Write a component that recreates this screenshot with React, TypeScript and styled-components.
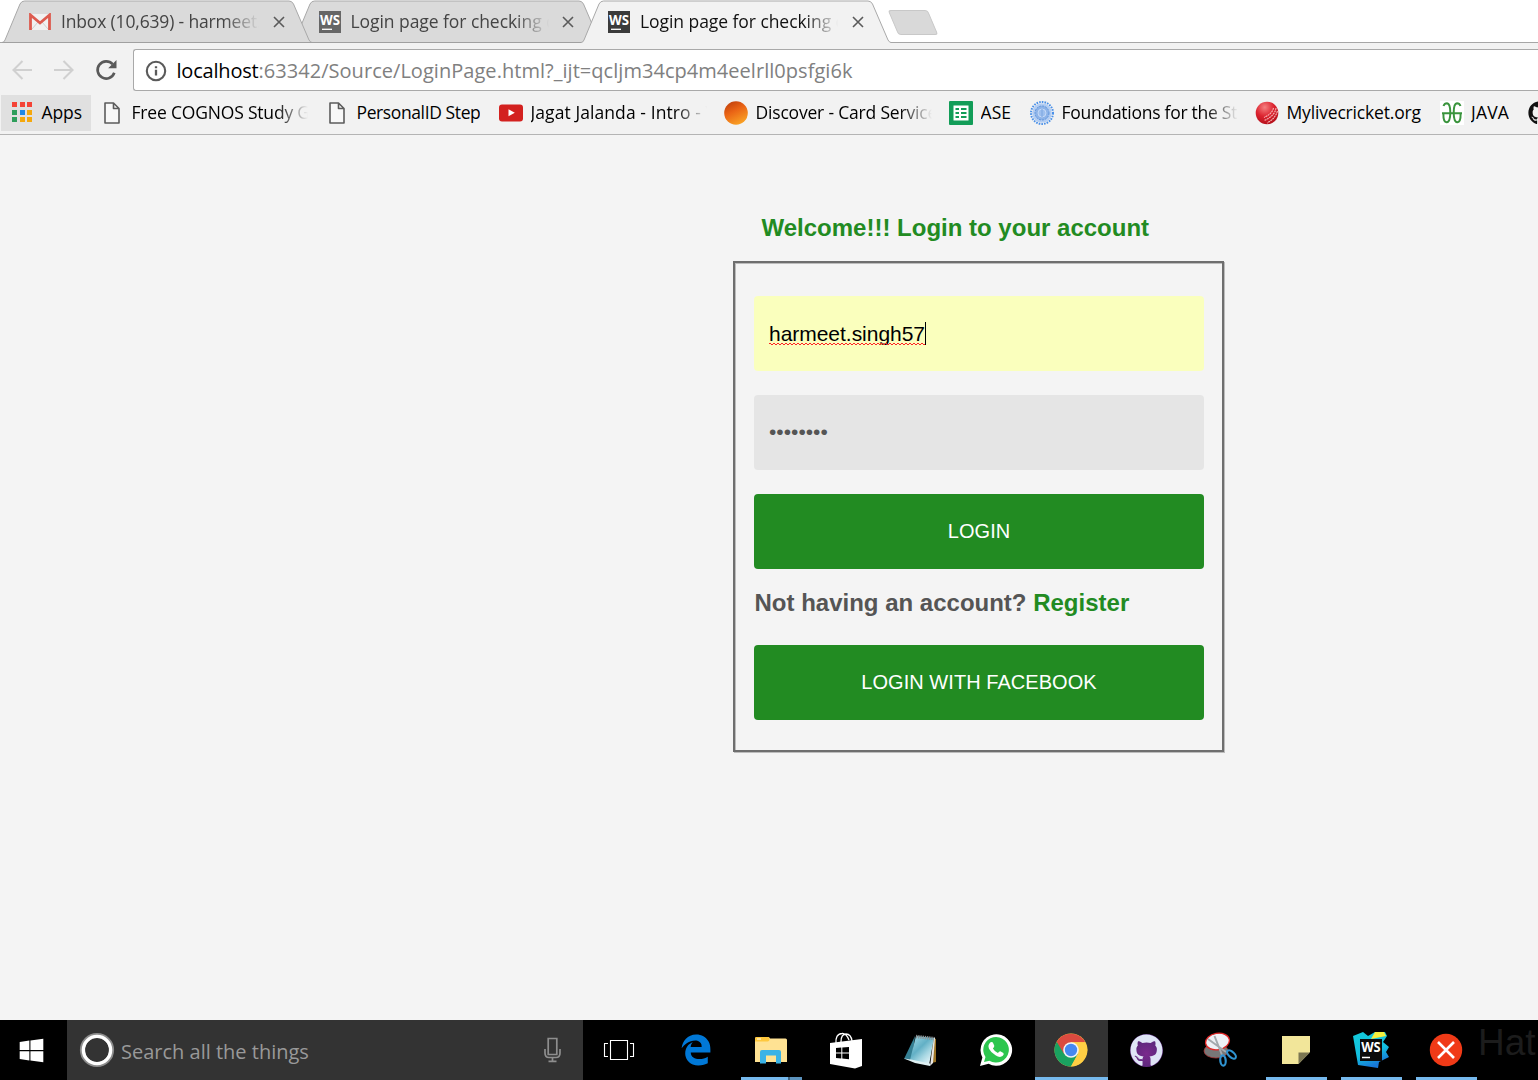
import React from "react";
import styled, { createGlobalStyle, css } from "styled-components";
import { FaWindows, FaEdgeLegacy, FaGithub } from "react-icons/fa6";

const uiFont = `"Open Sans", "Noto Sans", sans-serif`;
const pageFont = `"Liberation Sans", Arial, sans-serif`;

const GlobalStyle = createGlobalStyle`
  *, *::before, *::after { box-sizing: border-box; }
  body { margin: 0; background: #fff; overflow: hidden; }
  svg { display: block; flex: none; }
`;

const Screen = styled.div`
  display: flex;
  flex-direction: column;
  width: 1538px;
  height: 1080px;
  overflow: hidden;
  font-family: ${uiFont};
`;

/* ---------- Tab strip ---------- */

const TabStrip = styled.div`
  display: flex;
  flex: none;
  height: 43px;
  padding-left: 2px;
  background: #fff;
  box-shadow: inset 0 -1px 0 #a6a6a6;
`;

const Tab = styled.div<{ $layer: number }>`
  position: relative;
  z-index: ${(p) => p.$layer};
  display: flex;
  flex: none;
  align-items: center;
  width: 310px;
  height: 43px;
  margin-right: -20.5px;
  padding: 0 24px 0 27px;
`;

const TabShape = styled.svg`
  position: absolute;
  inset: 0;
  z-index: -1;
`;

const TabTitle = styled.span<{ $active?: boolean; $spacing: number }>`
  flex: none;
  width: 198px;
  margin: 0 0 1.5px 10px;
  overflow: hidden;
  white-space: nowrap;
  font-size: 17.5px;
  line-height: 24px;
  letter-spacing: ${(p) => p.$spacing}px;
  color: ${(p) => (p.$active ? "#111" : "#444")};
  mask-image: linear-gradient(to right, #000 calc(100% - 34px), transparent);
`;

const CloseIcon = styled.svg`
  margin-left: 13.5px;
`;

const NewTab = styled.div`
  flex: none;
  width: 40px;
  height: 25px;
  margin: 10px 0 0 22px;
  border: 1px solid #c8c8c8;
  border-radius: 3px;
  background: #d9d9d9;
  transform: skewX(23deg);
`;

/* ---------- Address bar ---------- */

const Toolbar = styled.div`
  display: flex;
  flex: none;
  align-items: center;
  height: 49px;
  padding: 6px 0 1px 10px;
  background: #f2f2f2;
`;

const NavButton = styled.div`
  display: flex;
  justify-content: center;
  width: 42px;
  &:first-child { margin-left: -9px; }
`;

const Omnibox = styled.div`
  display: flex;
  flex: 1;
  align-items: center;
  height: 42px;
  margin-left: 6px;
  padding: 1px 0 0 11px;
  border: 1px solid #a9a9a9;
  border-right: 0;
  border-radius: 3px 0 0 3px;
  background: #fff;
`;

const Url = styled.span`
  margin-left: 9.5px;
  font-size: 20px;
  line-height: 28px;
  letter-spacing: 0.04px;
  color: #808080;
`;

const Host = styled.span`
  letter-spacing: -0.2px;
  color: #000;
`;

/* ---------- Bookmarks ---------- */

const BookmarkBar = styled.div`
  display: flex;
  flex: none;
  height: 43px;
  padding: 3px 0 3px 1px;
  overflow: hidden;
  border-bottom: 1px solid #b4b4b4;
  background: #f2f2f2;
`;

const AppsButton = styled.div`
  display: flex;
  flex: none;
  align-items: center;
  width: 90px;
  height: 36px;
  margin-right: 9px;
  padding: 0 0 2px 11px;
  gap: 9.5px;
  background: #e0e0e0;
  color: #000;
  font-size: 17.5px;
  letter-spacing: -0.1px;
`;

const AppsGrid = styled.div`
  display: grid;
  grid-template-columns: repeat(3, 5px);
  grid-auto-rows: 5px;
  gap: 2.5px;
`;

const AppsDot = styled.i<{ $color: string }>`
  background: ${(p) => p.$color};
`;

const Bookmark = styled.div<{ $width: number }>`
  display: flex;
  flex: none;
  align-items: center;
  width: ${(p) => p.$width}px;
  height: 36px;
  padding-bottom: 1px;
`;

const BookmarkIcon = styled.div`
  display: flex;
  flex: none;
  justify-content: center;
  width: 24px;
  margin-right: 7.5px;
`;

const BookmarkLabel = styled.span<{ $spacing: number; $fade?: boolean }>`
  margin-bottom: 2px;
  overflow: hidden;
  white-space: nowrap;
  font-size: 17.5px;
  line-height: 24px;
  letter-spacing: ${(p) => p.$spacing}px;
  color: #000;
  ${(p) =>
    p.$fade &&
    css`
      width: 176px;
      mask-image: linear-gradient(to right, #000 calc(100% - 32px), transparent);
    `}
`;

/* ---------- Page ---------- */

const Page = styled.main`
  flex: 1;
  padding: 79px 0 0 733px;
  background: #f4f4f4;
  font-family: ${pageFont};
`;

const Title = styled.h1`
  margin: 0 0 19px;
  padding-left: 28.5px;
  font-size: 24px;
  line-height: 28px;
  color: #228b22;
`;

const LoginBox = styled.form`
  display: flex;
  flex-direction: column;
  width: 491px;
  height: 491px;
  padding: 33px 18px 0 19px;
  border: 2px solid #6e6e6e;
  box-shadow: 1px 1px 0 #bcbcbc, inset 1px 1px 0 #bcbcbc;
`;

const Field = styled.div<{ $filled?: boolean }>`
  display: flex;
  align-items: center;
  height: 75px;
  margin-bottom: 24px;
  padding: 0 15px 1px;
  border-radius: 4px;
  background: ${(p) => (p.$filled ? "#faffbd" : "#e5e5e5")};
  color: ${(p) => (p.$filled ? "#000" : "#555")};
  font-size: 21px;
  line-height: 24px;
`;

const Misspelled = styled.span`
  position: relative;
  padding-top: 2px;
  letter-spacing: -0.03px;
  &::after {
    content: "";
    position: absolute;
    left: 0;
    right: 0;
    bottom: 1px;
    height: 2px;
    background:
      repeating-linear-gradient(to right, #f22 0 2px, transparent 2px 4px) 0 0 / 100% 1px no-repeat,
      repeating-linear-gradient(to right, transparent 0 2px, #f22 2px 4px) 0 1px / 100% 1px no-repeat;
  }
`;

const Caret = styled.span`
  width: 1px;
  height: 23px;
  background: #000;
`;

const Button = styled.button`
  flex: none;
  height: 75px;
  padding: 0 0 1px;
  border: 0;
  border-radius: 4px;
  background: #228b22;
  color: #fff;
  font: 20px ${pageFont};
  letter-spacing: 0.05px;
`;

const Hint = styled.p`
  margin: 20px 0 28px;
  padding-left: 0.5px;
  font-size: 24px;
  font-weight: bold;
  line-height: 28px;
  color: #555;
`;

const Register = styled.a`
  color: #228b22;
`;

/* ---------- Taskbar ---------- */

const Taskbar = styled.footer`
  display: flex;
  flex: none;
  height: 60px;
  overflow: hidden;
  background: #000;
`;

const StartButton = styled.div`
  display: flex;
  flex: none;
  align-items: center;
  justify-content: center;
  width: 67px;
  padding: 0 5px 0 0;
  color: #fff;
`;

const SearchBox = styled.div`
  display: flex;
  flex: none;
  align-items: center;
  width: 516px;
  margin-right: 2px;
  padding: 0 21px 0 12px;
  background: #333;
  color: #999;
  font-size: 20px;
`;

const SearchText = styled.span`
  flex: 1;
  padding: 2px 0 0 6px;
`;

const Task = styled.div<{ $open?: boolean; $focused?: boolean; $stacked?: boolean; $nudge?: number }>`
  display: flex;
  flex: none;
  align-items: center;
  justify-content: center;
  position: relative;
  width: 73px;
  margin-right: 2px;
  padding-right: ${(p) => p.$nudge ?? 1.5}px;
  background: ${(p) => (p.$focused ? "#333" : "transparent")};
  ${(p) =>
    (p.$open || p.$focused) &&
    css`
      &::after {
        content: "";
        position: absolute;
        bottom: 0;
        left: ${p.$focused ? 0 : 6}px;
        right: ${p.$focused ? 0 : 6}px;
        height: 3px;
        background: ${p.$stacked
          ? "linear-gradient(to right, #76b9ed 47px, #3e6482 47px 49px, #5c93be 49px)"
          : "#76b9ed"};
      }
    `}
`;

const EdgeIcon = styled(FaEdgeLegacy)`
  color: #0078d7;
`;

const CatBadge = styled.div`
  display: flex;
  border-radius: 50%;
  background: radial-gradient(circle at 50% 60%, #7a2a8c, #43266f);
  color: #dfe5f6;
`;

const Overflow = styled.span`
  flex: none;
  margin: 2px 0 0 -7px;
  font: 37px/42px ${pageFont};
  color: #1c1c1c;
`;

/* ---------- Drawings ---------- */

const TabBackground = ({ active }: { active?: boolean }) => (
  <TabShape width="310" height="43" viewBox="0 0 310 43">
    <path
      d="M0 43V42.5Q2 42.5 3 40L18 4Q19.5 1 22.5 1H287Q290 1 291.5 4L307 40Q308.5 42.5 310 42.5V43Z"
      fill={active ? "#f2f2f2" : "#dadada"}
    />
    <path
      d="M0 42.5Q2 42.5 3 40L18 4Q19.5 1 22.5 1H287Q290 1 291.5 4L307 40Q308.5 42.5 310 42.5"
      fill="none"
      stroke="#a9a9a9"
    />
    {!active && <path d="M0 42.5H310" stroke="#a0a0a0" />}
  </TabShape>
);

const Close = () => (
  <CloseIcon width="12" height="12" viewBox="0 0 12 12">
    <path d="M1 1L11 11M11 1L1 11" stroke="#5a5a5a" strokeWidth="1.6" />
  </CloseIcon>
);

const GmailIcon = () => (
  <svg width="22" height="18" viewBox="0 0 22 18">
    <rect x="1" y="1" width="20" height="16" rx="1" fill="#f1f1f1" />
    <path d="M3 16L9 9M19 16L13 9" stroke="#d0d0d0" />
    <path d="M1.5 17V2L11 10L20.5 2V17" fill="none" stroke="#dd5b4f" strokeWidth="2.8" />
  </svg>
);

const WebStormMark = ({ color }: { color: string }) => (
  <svg width="22" height="22" viewBox="0 0 22 22">
    <rect width="22" height="22" fill={color} />
    <text x="1" y="13.6" fontFamily="Open Sans" fontWeight="700" fontSize="14.5" textLength="20" lengthAdjust="spacingAndGlyphs" fill="#fff">WS</text>
    <path d="M3 18.3H13" stroke="#fff" strokeWidth="1.3" />
  </svg>
);

const ArrowIcon = ({ forward }: { forward?: boolean }) => (
  <svg width="20" height="20" viewBox="0 0 20 20">
    <path
      d={forward ? "M0 10H18M9.5 1L18.5 10L9.5 19" : "M20 10H2M10.5 1L1.5 10L10.5 19"}
      fill="none" stroke="#d0d0d0" strokeWidth="2.1"
    />
  </svg>
);

const ReloadIcon = () => (
  <svg width="22" height="22" viewBox="0 0 22 22">
    <path d="M17.6 5.2A8.6 8.6 0 1 0 19.3 13.8" fill="none" stroke="#5a5a5a" strokeWidth="2.6" />
    <path d="M21.5 1V9.3H13.2Z" fill="#5a5a5a" />
  </svg>
);

const InfoIcon = () => (
  <svg width="22" height="22" viewBox="0 0 22 22">
    <circle cx="11" cy="11" r="9.2" fill="none" stroke="#5a5a5a" strokeWidth="2.1" />
    <path d="M11 9.8V15.6M11 6.2V8.2" stroke="#5a5a5a" strokeWidth="2.3" />
  </svg>
);

const DocIcon = () => (
  <svg width="16" height="22" viewBox="0 0 16 22">
    <path d="M1 1H9.5L15 6.5V21H1ZM9.5 1V6.5H15" fill="#f8f8f8" stroke="#5c5c5c" strokeWidth="1.6" strokeLinejoin="round" />
  </svg>
);

const YoutubeIcon = () => (
  <svg width="24" height="18" viewBox="0 0 24 18">
    <rect y="0.5" width="24" height="17" rx="3" fill="#d3211f" />
    <path d="M9.5 5.3V12.3L15.8 8.8Z" fill="#fff" />
  </svg>
);

const DiscoverIcon = () => (
  <svg width="24" height="24" viewBox="0 0 24 24">
    <defs>
      <linearGradient id="disc" x1="0.25" y1="0" x2="0.75" y2="1">
        <stop offset="0" stopColor="#c2410c" />
        <stop offset="0.4" stopColor="#ea6415" />
        <stop offset="1" stopColor="#fba826" />
      </linearGradient>
    </defs>
    <circle cx="12" cy="12" r="11.8" fill="url(#disc)" />
  </svg>
);

const SheetIcon = () => (
  <svg width="24" height="24" viewBox="0 0 24 24">
    <rect width="24" height="24" rx="1" fill="#129d58" />
    <rect x="4.5" y="4.5" width="15" height="15" fill="#fff" />
    <path d="M6.5 8H10M12 8H17.5M6.5 12H10M12 12H17.5M6.5 16H10M12 16H17.5" stroke="#129d58" strokeWidth="2" />
  </svg>
);

const SealIcon = () => (
  <svg width="24" height="24" viewBox="0 0 24 24">
    <circle cx="12" cy="12" r="11" fill="none" stroke="#4a90e8" strokeWidth="2" strokeDasharray="1.6 1.1" />
    <circle cx="12" cy="12" r="9.8" fill="#b3cdf2" />
    <circle cx="12" cy="12" r="7" fill="#8db3e8" stroke="#5f95dc" strokeDasharray="2 1" />
    <circle cx="12" cy="12" r="4" fill="#9dbfee" stroke="#cfdff8" strokeWidth="0.8" />
    <path d="M12 8V16" stroke="#7ba5e0" />
  </svg>
);

const CricketIcon = () => (
  <svg width="24" height="24" viewBox="0 0 24 24">
    <defs>
      <radialGradient id="ball" cx="0.4" cy="0.25" r="0.8">
        <stop offset="0" stopColor="#f58080" />
        <stop offset="0.5" stopColor="#dc2430" />
        <stop offset="1" stopColor="#b00d18" />
      </radialGradient>
    </defs>
    <circle cx="12" cy="12" r="11.3" fill="url(#ball)" />
    <path d="M21 7Q20 15 9 19.5M22.5 10Q20 18 12 22M18.5 7Q17 13 9 16.5" fill="none" stroke="#f6b5b5" strokeWidth="1.1" strokeDasharray="2 0.6" />
  </svg>
);

const GeeksIcon = () => (
  <svg width="24" height="24" viewBox="0 0 24 24">
    <rect width="24" height="24" fill="#fff" />
    <path
      d="M3.5 5Q4.5 2.3 7 2.3Q10.3 2.8 10.3 11.5Q10.3 21.3 6.5 21.3Q3.2 21 3.4 12.2M2 12.2H22M20.5 5Q19.5 2.3 17 2.3Q13.7 2.8 13.7 11.5Q13.7 21.3 17.5 21.3Q20.8 21 20.6 12.2"
      fill="none" stroke="#3a943d" strokeWidth="2"
    />
  </svg>
);

const CortanaRing = () => (
  <svg width="36" height="36" viewBox="0 0 36 36">
    <circle cx="18" cy="18" r="14.6" fill="none" stroke="#8d8d8d" strokeWidth="5" />
    <circle cx="18" cy="18" r="13.6" fill="none" stroke="#fff" strokeWidth="3.4" />
  </svg>
);

const MicIcon = () => (
  <svg width="20" height="26" viewBox="0 0 20 26">
    <path d="M6.2 1.5H14.8V17.5H6.2ZM3 12V16Q3 20.5 7 20.5H14Q18 20.5 18 16V12M10.5 20.5V24.3M6.5 24.3H14.5" fill="none" stroke="#8e8e8e" strokeWidth="1.7" />
  </svg>
);

const TaskViewIcon = () => (
  <svg width="32" height="22" viewBox="0 0 32 22">
    <path d="M7.5 1.5H24.5V20.5H7.5ZM5 4.5H1.5V17.5H5M27 4.5H30.5V17.5H27" fill="none" stroke="#fff" strokeWidth="1.1" />
  </svg>
);

const FolderIcon = () => (
  <svg width="32" height="27" viewBox="0 0 32 27">
    <path d="M0 1.5Q0 0 1.5 0H13Q14.5 0 15 1.5H30.5Q32 1.5 32 3V25H0Z" fill="#ffe293" />
    <path d="M0 4.5V1.5Q0 0 1.5 0H13Q14.5 0 14.5 2Q14.5 4.5 12.5 4.5Z" fill="#ffc83d" />
    <path d="M2 2H6" stroke="#fff" strokeWidth="1" />
    <path d="M5 26.5V15Q5 13 7 13H24Q26 13 26 15V26.5H21V18.5H11V26.5Z" fill="#3bb3e6" />
  </svg>
);

const StoreIcon = () => (
  <svg width="34" height="37" viewBox="0 0 34 37">
    <path d="M7 12Q6 2 13 1.5Q17 1 20 8M12 10Q12 2 17 2Q22 2 23 9" fill="none" stroke="#fff" strokeWidth="1.3" />
    <path d="M1 11L33 7V34L26 36.5L1 32Z" fill="#fff" />
    <path d="M7 16L12.3 15.6V20.5H7ZM13.3 15.5L20 15V20.5H13.3ZM7 21.6H12.3V26.5L7 26.1ZM13.3 21.6H20V27.2L13.3 26.6Z" fill="#000" />
  </svg>
);

const NotepadIcon = () => (
  <svg width="34" height="33" viewBox="0 0 34 33">
    <defs>
      <linearGradient id="pad" x1="0" y1="0" x2="0.8" y2="1">
        <stop offset="0" stopColor="#a8dce8" />
        <stop offset="0.45" stopColor="#62b0c6" />
        <stop offset="0.7" stopColor="#a5d6e2" />
        <stop offset="1" stopColor="#eaf7fa" />
      </linearGradient>
    </defs>
    <path d="M30 4L33 5V28L28 29Z" fill="#9c7425" />
    <path d="M31 3L27 32L30 29L32 4Z" fill="#e8e8e8" />
    <path d="M12 2L1 25L9 26Z" fill="#357f93" />
    <path d="M13 2L31 4L26 31L7 26Z" fill="url(#pad)" />
    <path d="M1 24.5L8 25.5L27 29.5V32L12 29Z" fill="#e0f1f4" />
    <path d="M13 2.5L31 4.5" stroke="#8b9294" strokeWidth="3.4" strokeDasharray="1.3 0.9" />
  </svg>
);

const WhatsAppIcon = () => (
  <svg width="34" height="34" viewBox="0 0 34 34">
    <path d="M1 33L3.4 24.5A15.8 15.8 0 1 1 9.6 30.8Z" fill="#fff" />
    <path d="M5 29L6.5 24A12.8 12.8 0 1 1 10.4 27.7Z" fill="#2cc64e" />
    <path d="M11.5 9.3Q13.5 8.5 14.2 10.2L15.3 12.8Q15.5 14 13.9 15.5Q15.5 18.5 18.9 20Q20.5 18 21.3 18.3L24.4 19.9Q25.4 21.1 23.5 23.1Q20.8 25 16.5 22.3Q12 19.7 10 15.7Q8.4 12 11.5 9.3Z" fill="#fff" />
  </svg>
);

const ChromeIcon = () => (
  <svg width="34" height="34" viewBox="0 0 34 34">
    <circle cx="17" cy="17" r="16.5" fill="#ffce44" />
    <path d="M17 17L2.7 8.7A16.5 16.5 0 0 0 17 33.5L24 20.5Z" fill="#1aa260" />
    <path d="M2.7 8.7A16.5 16.5 0 0 1 31.3 9.2H17L9.8 20.5Z" fill="#db4a3f" />
    <path d="M17 33.5A16.5 16.5 0 0 0 31.3 9.2H17L24.1 21Z" fill="#ffce44" />
    <circle cx="17" cy="17" r="7.8" fill="#f3f3f3" />
    <circle cx="17" cy="17" r="6.2" fill="#4688f1" />
  </svg>
);

const SnipIcon = () => (
  <svg width="35" height="36" viewBox="0 0 35 36">
    <ellipse cx="13" cy="19" rx="12" ry="7" fill="#777" stroke="#a33" strokeWidth="0.8" />
    <ellipse cx="14.5" cy="9.5" rx="12" ry="8.2" transform="rotate(-10 14.5 9.5)" fill="#eef0f6" stroke="#e02525" strokeWidth="1.3" />
    <path d="M5 7L23 20M11.5 4L19 23" stroke="#a3a8ad" strokeWidth="2" />
    <ellipse cx="20" cy="28.5" rx="2.7" ry="5.2" transform="rotate(-6 20 28.5)" fill="none" stroke="#2f93d0" strokeWidth="2.2" />
    <ellipse cx="28.5" cy="22.5" rx="2.7" ry="5.4" transform="rotate(-48 28.5 22.5)" fill="none" stroke="#2f93d0" strokeWidth="2.2" />
  </svg>
);

const StickyIcon = () => (
  <svg width="28" height="28" viewBox="0 0 28 28">
    <path d="M0 0H28V16L16.5 28H0Z" fill="#f2e69a" />
    <path d="M16.5 16.5H28L16.5 28Z" fill="#7c7752" />
  </svg>
);

const WebStormIcon = () => (
  <svg width="36" height="36" viewBox="0 0 36 36">
    <defs>
      <linearGradient id="storm" x1="0" y1="0" x2="0.4" y2="1">
        <stop offset="0" stopColor="#12c9d8" />
        <stop offset="0.65" stopColor="#13bfe0" />
        <stop offset="1" stopColor="#1878d8" />
      </linearGradient>
    </defs>
    <path d="M0 4L10 0L15 4L22 0H32L34 4L30 10L36 15L33 20L36 25L26 30L25 36L5 33Z" fill="url(#storm)" />
    <path d="M22 0H31L33 4L18 7Z" fill="#f5ef3c" />
    <rect x="7" y="7" width="22" height="22" fill="#0c0c0c" />
    <text x="8.2" y="19.8" fontFamily="Open Sans" fontWeight="700" fontSize="14" textLength="19.5" lengthAdjust="spacingAndGlyphs" fill="#fff">WS</text>
    <path d="M9 25.5H17" stroke="#fff" strokeWidth="1.5" />
  </svg>
);

const ErrorIcon = () => (
  <svg width="34" height="34" viewBox="0 0 34 34">
    <circle cx="17" cy="17" r="16.2" fill="#f03a17" />
    <path d="M9 9L25 25M25 9L9 25" stroke="#fff" strokeWidth="2.6" />
  </svg>
);

/* ---------- Data ---------- */

const appColors = ["#f44336", "#f44336", "#f44336", "#2e9e5b", "#1e88e5", "#f5a80c", "#2e9e5b", "#f5a80c", "#f5a80c"];

const bookmarks = [
  { label: "Free COGNOS Study Guide", width: 225, spacing: -0.19, fade: true, icon: <DocIcon /> },
  { label: "PersonalID Step", width: 174, spacing: -0.39, icon: <DocIcon /> },
  { label: "Jagat Jalanda - Intro - Y", width: 225, spacing: 0.08, fade: true, icon: <YoutubeIcon /> },
  { label: "Discover - Card Services", width: 225, spacing: -0.19, fade: true, icon: <DiscoverIcon /> },
  { label: "ASE", width: 81, spacing: 0.1, icon: <SheetIcon /> },
  { label: "Foundations for the Study", width: 225, spacing: -0.27, fade: true, icon: <SealIcon /> },
  { label: "Mylivecricket.org", width: 184.5, spacing: -0.17, icon: <CricketIcon /> },
  { label: "JAVA", width: 88, spacing: 0.2, icon: <GeeksIcon /> },
  { label: "", width: 30, spacing: 0, icon: <FaGithub size={24} color="#111" /> },
];

const tabs = [
  { title: "Inbox (10,639) - harmeet.s", spacing: -0.16, layer: 2, icon: <GmailIcon /> },
  { title: "Login page for checking c", spacing: -0.06, layer: 1, icon: <WebStormMark color="#666" /> },
  { title: "Login page for checking c", spacing: -0.06, layer: 3, active: true, icon: <WebStormMark color="#3b3b3b" /> },
];

export default function App() {
  return (
    <Screen>
      <GlobalStyle />
      <TabStrip>
        {tabs.map((tab, i) => (
          <Tab key={i} $layer={tab.layer}>
            <TabBackground active={tab.active} />
            {tab.icon}
            <TabTitle $active={tab.active} $spacing={tab.spacing}>{tab.title}</TabTitle>
            <Close />
          </Tab>
        ))}
        <NewTab />
      </TabStrip>

      <Toolbar>
        <NavButton><ArrowIcon /></NavButton>
        <NavButton><ArrowIcon forward /></NavButton>
        <NavButton><ReloadIcon /></NavButton>
        <Omnibox>
          <InfoIcon />
          <Url><Host>localhost</Host>:63342/Source/LoginPage.html?_ijt=qcljm34cp4m4eelrll0psfgi6k</Url>
        </Omnibox>
      </Toolbar>

      <BookmarkBar>
        <AppsButton>
          <AppsGrid>{appColors.map((c, i) => <AppsDot key={i} $color={c} />)}</AppsGrid>
          Apps
        </AppsButton>
        {bookmarks.map((b, i) => (
          <Bookmark key={i} $width={b.width}>
            <BookmarkIcon>{b.icon}</BookmarkIcon>
            {b.label && <BookmarkLabel $spacing={b.spacing} $fade={b.fade}>{b.label}</BookmarkLabel>}
          </Bookmark>
        ))}
      </BookmarkBar>

      <Page>
        <Title>Welcome!!! Login to your account</Title>
        <LoginBox>
          <Field $filled><Misspelled>harmeet.singh57</Misspelled><Caret /></Field>
          <Field>••••••••</Field>
          <Button type="button">LOGIN</Button>
          <Hint>Not having an account? <Register>Register</Register></Hint>
          <Button type="button">LOGIN WITH FACEBOOK</Button>
        </LoginBox>
      </Page>

      <Taskbar>
        <StartButton><FaWindows size={27} /></StartButton>
        <SearchBox>
          <CortanaRing />
          <SearchText>Search all the things</SearchText>
          <MicIcon />
        </SearchBox>
        <Task $nudge={6}><TaskViewIcon /></Task>
        <Task><EdgeIcon size={32} /></Task>
        <Task $open $stacked><FolderIcon /></Task>
        <Task $nudge={1}><StoreIcon /></Task>
        <Task $nudge={3}><NotepadIcon /></Task>
        <Task $nudge={1}><WhatsAppIcon /></Task>
        <Task $focused><ChromeIcon /></Task>
        <Task $nudge={1}><CatBadge><FaGithub size={33} /></CatBadge></Task>
        <Task $nudge={2}><SnipIcon /></Task>
        <Task $open><StickyIcon /></Task>
        <Task $open><WebStormIcon /></Task>
        <Task $open><ErrorIcon /></Task>
        <Overflow>Hat</Overflow>
      </Taskbar>
    </Screen>
  );
}
